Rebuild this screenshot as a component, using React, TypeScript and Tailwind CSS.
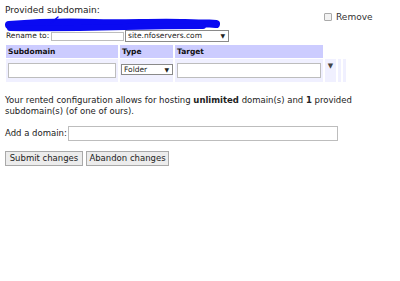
import { ChangeEvent } from 'react'

const font = { fontFamily: '"DejaVu Sans", Verdana, sans-serif' }

function Scribble() {
  return (
    <svg
      className="pointer-events-none absolute left-0 top-[10px]"
      width="220"
      height="20"
      viewBox="0 0 220 20"
      fill="none"
    >
      <path
        d="M4 11 C 30 9, 60 8, 90 9 S 150 8, 180 9 S 205 9, 211 10"
        stroke="#0a0af2"
        strokeWidth="8"
        strokeLinecap="round"
      />
      <path
        d="M5 14 C 40 14.5, 80 14, 120 13 S 170 12, 198 12"
        stroke="#0a0af2"
        strokeWidth="6"
        strokeLinecap="round"
      />
      <path d="M46 9 L 53 3" stroke="#0a0af2" strokeWidth="1.5" strokeLinecap="round" />
    </svg>
  )
}

function FakeSelect({ label, className }: { label: string; className: string }) {
  return (
    <div
      className={`flex items-center justify-between border border-[#8a8a8a] bg-white pl-[2px] pr-[3px] text-[7.5px] leading-none text-[#222] ${className}`}
    >
      <span>{label}</span>
      <span className="text-[6px]">▼</span>
    </div>
  )
}

export default function App() {
  const noop = (_e: ChangeEvent<HTMLInputElement>) => {}

  return (
    <div className="h-[281px] w-[400px] overflow-hidden bg-white text-[#222]" style={font}>
      <div className="flex pl-[5px] pt-[4px]">
        <div className="relative w-[319px]">
          <Scribble />
          <p className="h-[12px] text-[9px] leading-[12px]">Provided subdomain:</p>
          <div className="mt-[14px] flex items-center">
            <span className="w-[46px] pl-[1px] text-[7.5px] leading-none">Rename to:</span>
            <input
              className="h-[9px] w-[73px] border border-[#bdbdbd] bg-white outline-none"
              onChange={noop}
            />
            <FakeSelect label="site.nfoservers.com" className="ml-[1px] h-[12px] w-[104px]" />
          </div>
        </div>
        <label className="mt-[8px] flex h-[10px] items-center gap-[4px] text-[9px] leading-none text-[#333]">
          <span className="h-[8px] w-[8px] rounded-[1px] border border-[#aaa] bg-[#f2f2f2]" />
          Remove
        </label>
      </div>

      <div className="mt-[3px] pl-[6px]">
        <div className="flex h-[13px] gap-[2px] text-[7.5px] font-bold leading-[13px] text-[#111]">
          <div className="w-[112px] bg-[#ccccff] pl-[2px]">Subdomain</div>
          <div className="w-[53px] bg-[#ccccff] pl-[2px]">Type</div>
          <div className="w-[148px] bg-[#ccccff] pl-[2px]">Target</div>
        </div>
        <div className="mt-[1px] flex h-[23px] gap-[2px]">
          <div className="flex w-[112px] items-center bg-[#f0f0ff] pl-[2px]">
            <input
              className="h-[15px] w-[108px] border border-[#bdbdbd] bg-white outline-none"
              onChange={noop}
            />
          </div>
          <div className="flex w-[53px] items-start bg-[#f0f0ff] pl-[1px] pt-[5px]">
            <FakeSelect label="Folder" className="h-[11px] w-[52px]" />
          </div>
          <div className="flex w-[148px] items-center bg-[#f0f0ff] pl-[2px]">
            <input
              className="h-[15px] w-[144px] border border-[#bdbdbd] bg-white outline-none"
              onChange={noop}
            />
          </div>
          <div className="flex w-[11px] justify-center bg-[#f0f0ff] pt-[4px] text-[7px] leading-none text-[#444]">
            ▼
          </div>
          <div className="w-[3px] bg-[#f0f0ff]" />
          <div className="w-[3px] bg-[#f0f0ff]" />
        </div>
      </div>

      <p className="mt-[13px] w-[362px] pl-[5px] text-[8.5px] leading-[11px] text-[#222]">
        Your rented configuration allows for hosting <b>unlimited</b> domain(s) and <b>1</b> provided
        subdomain(s) (of one of ours).
      </p>

      <div className="mt-[9px] flex items-center pl-[5px]">
        <span className="w-[63px] text-[8.5px] leading-none">Add a domain:</span>
        <input
          className="h-[15px] w-[270px] border border-[#bdbdbd] bg-white outline-none"
          onChange={noop}
        />
      </div>

      <div className="mt-[10px] flex gap-[3px] pl-[5px]">
        <button className="h-[15px] w-[78px] border border-[#a9a9a9] bg-[#ececec] text-[8.5px] leading-none text-[#222]">
          Submit changes
        </button>
        <button className="h-[15px] w-[83px] border border-[#a9a9a9] bg-[#ececec] text-[8.5px] leading-none text-[#222]">
          Abandon changes
        </button>
      </div>
    </div>
  )
}
